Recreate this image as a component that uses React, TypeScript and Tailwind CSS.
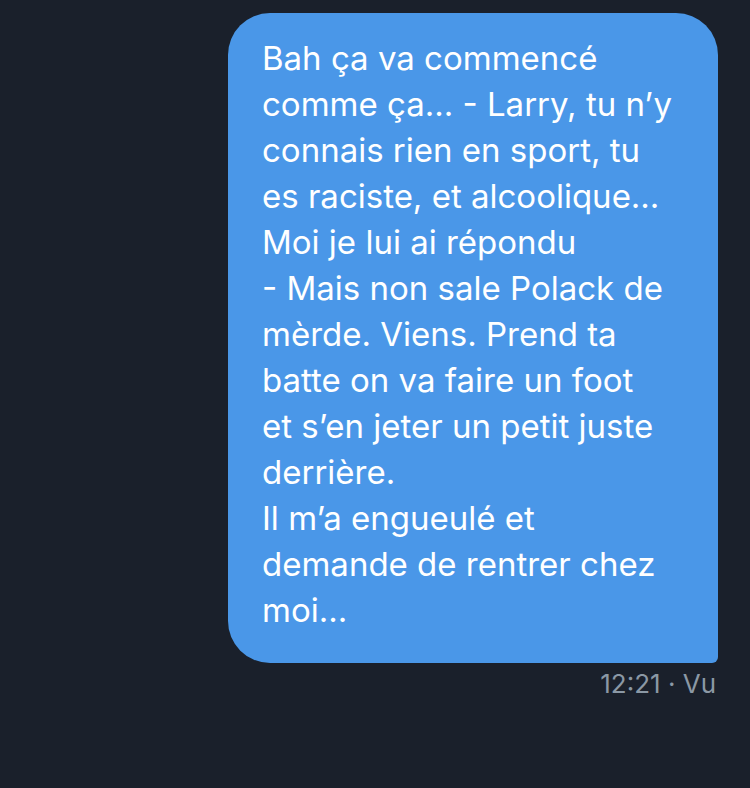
import React from 'react';

const LINES = [
  'Bah ça va commencé',
  'comme ça… - Larry, tu n’y',
  'connais rien en sport, tu',
  'es raciste, et alcoolique…',
  'Moi je lui ai répondu',
  '- Mais non sale Polack de',
  'mèrde. Viens. Prend ta',
  'batte on va faire un foot',
  'et s’en jeter un petit juste',
  'derrière.',
  'Il m’a engueulé et',
  'demande de rentrer chez',
  'moi…',
];

export default function App() {
  return (
    <div className="w-[750px] h-[788px] bg-[#1a202b] overflow-hidden" style={{ fontFamily: 'Inter, "Noto Sans", sans-serif' }}>
      <div className="pt-[13px] pl-[228px] flex flex-col">
        {/* Message bubble */}
        <div className="w-[490px] bg-[#4a97e8] rounded-[42px] rounded-br-[6px] pl-[34px] pr-4 pt-[22px] pb-[30px] text-white text-[33px] leading-[46px]">
          {LINES.map((line, i) => (
            <div key={i} className="whitespace-nowrap">{line}</div>
          ))}
        </div>
        <div className="w-[490px] flex justify-end pr-[2px] mt-[5px] text-[26px] leading-[32px] text-[#8b98a5]">
          12:21 · Vu
        </div>
      </div>
    </div>
  );
}
